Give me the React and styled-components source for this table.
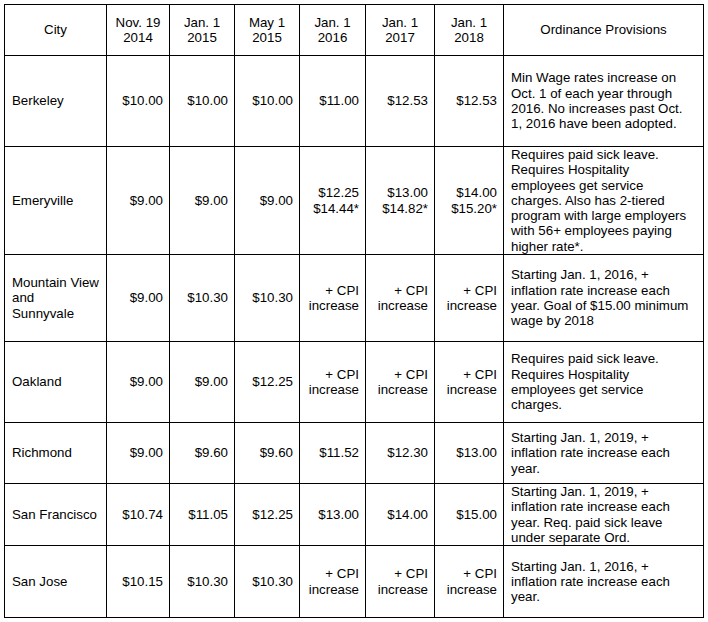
import React from 'react'
import styled, { createGlobalStyle } from 'styled-components'

const GlobalStyle = createGlobalStyle`
  html, body {
    margin: 0;
    background: #fff;
  }
  body {
    font-family: "Liberation Sans", Arial, sans-serif;
    color: #000;
  }
`

const columns = [102, 63, 65, 65, 66, 69, 69, 200]

const headers = [
  ['City'],
  ['Nov. 19', '2014'],
  ['Jan. 1', '2015'],
  ['May 1', '2015'],
  ['Jan. 1', '2016'],
  ['Jan. 1', '2017'],
  ['Jan. 1', '2018'],
  ['Ordinance Provisions'],
]

const CPI = ['+ CPI', 'increase']

const rows = [
  {
    city: ['Berkeley'],
    height: 91,
    rates: ['$10.00', '$10.00', '$10.00', '$11.00', '$12.53', '$12.53'],
    note: 'Min Wage rates increase on Oct. 1 of each year through 2016. No increases past Oct. 1, 2016 have been adopted.',
  },
  {
    city: ['Emeryville'],
    height: 108,
    rates: ['$9.00', '$9.00', '$9.00', ['$12.25', '$14.44*'], ['$13.00', '$14.82*'], ['$14.00', '$15.20*']],
    note: 'Requires paid sick leave. Requires Hospitality employees get service charges. Also has 2-tiered program with large employers with 56+ employees paying higher rate*.',
  },
  {
    city: ['Mountain View', 'and', 'Sunnyvale'],
    height: 87,
    rates: ['$9.00', '$10.30', '$10.30', CPI, CPI, CPI],
    note: 'Starting Jan. 1, 2016, + inflation rate increase each year. Goal of $15.00 minimum wage by 2018',
  },
  {
    city: ['Oakland'],
    height: 81,
    rates: ['$9.00', '$9.00', '$12.25', CPI, CPI, CPI],
    note: 'Requires paid sick leave. Requires Hospitality employees get service charges.',
  },
  {
    city: ['Richmond'],
    height: 61,
    rates: ['$9.00', '$9.60', '$9.60', '$11.52', '$12.30', '$13.00'],
    note: 'Starting Jan. 1, 2019, + inflation rate increase each year.',
  },
  {
    city: ['San Francisco'],
    height: 61,
    rates: ['$10.74', '$11.05', '$12.25', '$13.00', '$14.00', '$15.00'],
    note: 'Starting Jan. 1, 2019, + inflation rate increase each year. Req. paid sick leave under separate Ord.',
  },
  {
    city: ['San Jose'],
    height: 72,
    rates: ['$10.15', '$10.30', '$10.30', CPI, CPI, CPI],
    note: 'Starting Jan. 1, 2016, + inflation rate increase each year.',
  },
]

const Page = styled.div`
  padding: 4px;
`

const Table = styled.table`
  width: 700px;
  table-layout: fixed;
  border-collapse: collapse;
  border: 1px solid #000;
  font-size: 13.3px;
  line-height: 15.3px;
`

const HeadRow = styled.tr`
  height: 51px;
`

const HeadCell = styled.th`
  border: 1px solid #000;
  font-weight: normal;
  text-align: center;
  vertical-align: middle;
  padding: 0 4px;
`

const BodyRow = styled.tr`
  height: ${p => p.$h}px;
`

const Cell = styled.td`
  border: 1px solid #000;
  vertical-align: middle;
  padding: 0 6px 0 7px;
  text-align: ${p => p.$align || 'left'};
`

const NoteCell = styled(Cell)`
  padding: 0 14px 0 7px;
`

const Line = styled.span`
  display: block;
  white-space: nowrap;
`

const lines = v => (Array.isArray(v) ? v : [v]).map((t, i) => <Line key={i}>{t}</Line>)

export default function App() {
  return (
    <>
      <GlobalStyle />
      <Page>
        <Table>
          <colgroup>
            {columns.map((w, i) => <col key={i} style={{ width: w }} />)}
          </colgroup>
          <thead>
            <HeadRow>
              {headers.map((h, i) => <HeadCell key={i}>{lines(h)}</HeadCell>)}
            </HeadRow>
          </thead>
          <tbody>
            {rows.map(r => (
              <BodyRow key={r.city.join(' ')} $h={r.height}>
                <Cell>{lines(r.city)}</Cell>
                {r.rates.map((v, i) => <Cell key={i} $align="right">{lines(v)}</Cell>)}
                <NoteCell>{r.note}</NoteCell>
              </BodyRow>
            ))}
          </tbody>
        </Table>
      </Page>
    </>
  )
}
